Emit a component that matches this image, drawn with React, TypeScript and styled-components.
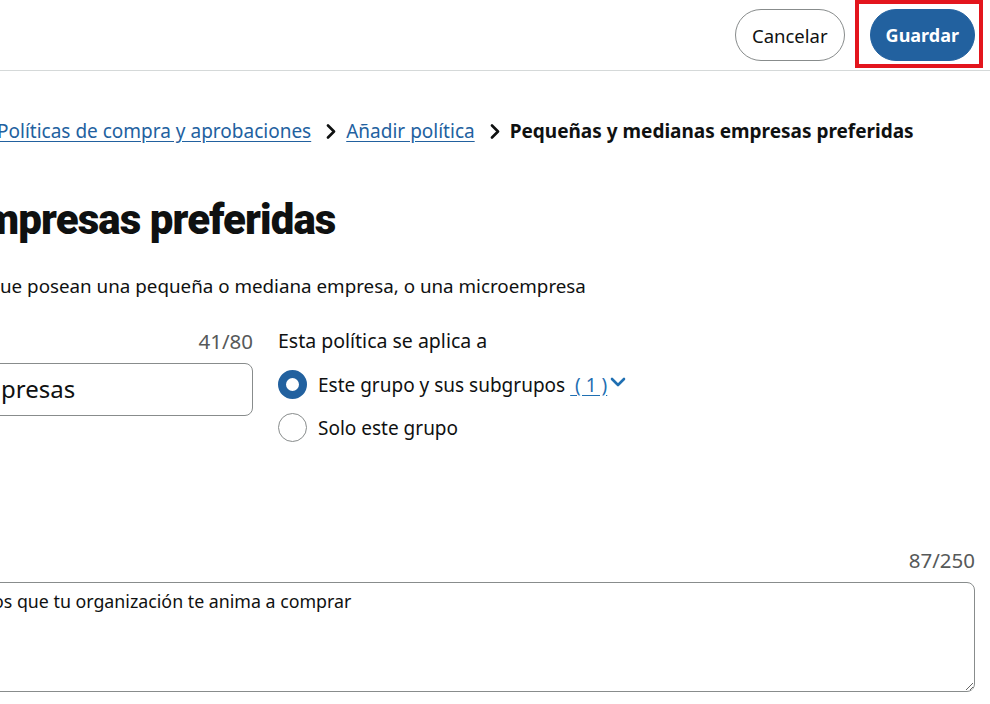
import React from "react";
import styled, { createGlobalStyle } from "styled-components";

const Global = createGlobalStyle`
  html, body { margin: 0; padding: 0; background: #fff; }
  body { font-family: "Noto Sans", "Open Sans", Arial, sans-serif; color: #0f1111; overflow: hidden; }
  * { box-sizing: border-box; }
`;

const Page = styled.div`
  width: 990px;
  height: 704px;
  overflow: hidden;
  display: flex;
  flex-direction: column;
`;

const Header = styled.header`
  height: 71px;
  border-bottom: 1px solid #d5d9d9;
  display: flex;
  justify-content: flex-end;
  align-items: flex-start;
  padding: 9px 15px 0 0;
  gap: 25px;
`;

const PillButton = styled.button<{ $primary?: boolean }>`
  height: 52px;
  padding: 0 ${(p) => (p.$primary ? "15px" : "16px")};
  border-radius: 26px;
  font-family: inherit;
  font-size: ${(p) => (p.$primary ? "18px" : "18.5px")};
  font-weight: ${(p) => (p.$primary ? 700 : 400)};
  color: ${(p) => (p.$primary ? "#fff" : "#0f1111")};
  background: ${(p) => (p.$primary ? "#22619f" : "#fff")};
  border: 1px solid ${(p) => (p.$primary ? "#22619f" : "#888c8c")};
  cursor: pointer;
`;

const Highlight = styled.div`
  position: relative;
  &::after {
    content: "";
    position: absolute;
    left: -15px;
    right: -8px;
    top: -9px;
    bottom: -7px;
    border: 4px solid #e3151d;
    pointer-events: none;
  }
`;

const Main = styled.main`
  padding: 0 15px 0 0;
  display: flex;
  flex-direction: column;
`;

const Breadcrumb = styled.nav`
  display: flex;
  align-items: center;
  margin-top: 48px;
  margin-left: -3px;
  font-size: 19px;
  line-height: 24px;
  white-space: nowrap;
`;

const Crumb = styled.a`
  color: #22619f;
  text-decoration: underline;
  text-underline-offset: 3px;
`;

const Current = styled.span`
  font-weight: 700;
  color: #0f1111;
`;

const Sep = styled.span`
  display: inline-flex;
  align-items: center;
  margin: 0 10px 0 15px;
`;

const Title = styled.h1`
  margin: 53px 0 0 -17px;
  font-family: Roboto, "Noto Sans", sans-serif;
  font-weight: 900;
  font-size: 42px;
  line-height: 48px;
  letter-spacing: -0.9px;
  color: #0f1111;
  white-space: nowrap;
`;

const Subtitle = styled.p`
  margin: 30px 0 0 0;
  font-size: 18.8px;
  line-height: 24px;
  white-space: nowrap;
`;

const FormRow = styled.div`
  display: grid;
  grid-template-columns: 253px 1fr;
  column-gap: 25px;
  margin-top: 31px;
`;

const Field = styled.div`
  display: flex;
  flex-direction: column;
`;

const Counter = styled.div`
  align-self: flex-end;
  font-size: 20.5px;
  line-height: 24px;
  color: #565959;
`;

const TextInput = styled.input`
  margin-top: 10px;
  margin-left: -12px;
  width: calc(100% + 12px);
  height: 53px;
  border: 1px solid #888c8c;
  border-radius: 8px;
  padding: 0 12px 2px 12px;
  font-family: inherit;
  font-size: 24px;
  color: #0f1111;
  outline: none;
`;

const Label = styled.div`
  font-size: 19.5px;
  line-height: 24px;
`;

const RadioList = styled.div`
  display: flex;
  flex-direction: column;
  gap: 14px;
  margin-top: 17px;
`;

const RadioRow = styled.label`
  display: flex;
  align-items: center;
  gap: 11px;
  font-size: 19px;
  line-height: 24px;
  white-space: nowrap;
`;

const RadioDot = styled.span<{ $checked?: boolean }>`
  width: 29px;
  height: 29px;
  border-radius: 50%;
  flex: none;
  background: #fff;
  border: ${(p) => (p.$checked ? "8.5px solid #22619f" : "1px solid #888c8c")};
`;

const CountLink = styled.a`
  color: #1f6fb2;
  text-decoration: underline;
  text-underline-offset: 3px;
  white-space: pre;
  margin-left: 5px;
`;

const Chevron = styled.span`
  display: inline-flex;
  margin-left: -8px;
  margin-top: -6px;
`;

const DescSection = styled.div`
  display: flex;
  flex-direction: column;
  margin-top: 106px;
`;

const TextArea = styled.textarea`
  margin-top: 10px;
  margin-left: -20px;
  width: calc(100% + 20px);
  height: 110px;
  border: 1px solid #888c8c;
  border-radius: 8px;
  padding: 6px 12px;
  font-family: inherit;
  font-size: 17.8px;
  line-height: 24px;
  color: #0f1111;
  outline: none;
`;

const ChevronRight = () => (
  <svg width="10" height="15" viewBox="0 0 10 15" fill="none">
    <path d="M2 1.5 L8 7.5 L2 13.5" stroke="#0f1111" strokeWidth="2.6" strokeLinecap="round" strokeLinejoin="round" />
  </svg>
);

const ChevronDown = () => (
  <svg width="16" height="10" viewBox="0 0 16 10" fill="none">
    <path d="M2 2 L8 8 L14 2" stroke="#1f6fb2" strokeWidth="2.6" strokeLinecap="round" strokeLinejoin="round" />
  </svg>
);

export default function App() {
  return (
    <>
      <Global />
      <Page>
        <Header>
          <PillButton>Cancelar</PillButton>
          <Highlight>
            <PillButton $primary>Guardar</PillButton>
          </Highlight>
        </Header>
        <Main>
          <Breadcrumb>
            <Crumb href="#">Políticas de compra y aprobaciones</Crumb>
            <Sep><ChevronRight /></Sep>
            <Crumb href="#">Añadir política</Crumb>
            <Sep><ChevronRight /></Sep>
            <Current>Pequeñas y medianas empresas preferidas</Current>
          </Breadcrumb>
          <Title>mpresas preferidas</Title>
          <Subtitle>ue posean una pequeña o mediana empresa, o una microempresa</Subtitle>
          <FormRow>
            <Field>
              <Counter>41/80</Counter>
              <TextInput readOnly value="presas" />
            </Field>
            <Field>
              <Label>Esta política se aplica a</Label>
              <RadioList>
                <RadioRow>
                  <RadioDot $checked />
                  <span>
                    Este grupo y sus subgrupos
                    <CountLink href="#"> ( 1 )</CountLink>
                  </span>
                  <Chevron><ChevronDown /></Chevron>
                </RadioRow>
                <RadioRow>
                  <RadioDot />
                  <span>Solo este grupo</span>
                </RadioRow>
              </RadioList>
            </Field>
          </FormRow>
          <DescSection>
            <Counter>87/250</Counter>
            <TextArea readOnly value="os que tu organización te anima a comprar" />
          </DescSection>
        </Main>
      </Page>
    </>
  );
}
